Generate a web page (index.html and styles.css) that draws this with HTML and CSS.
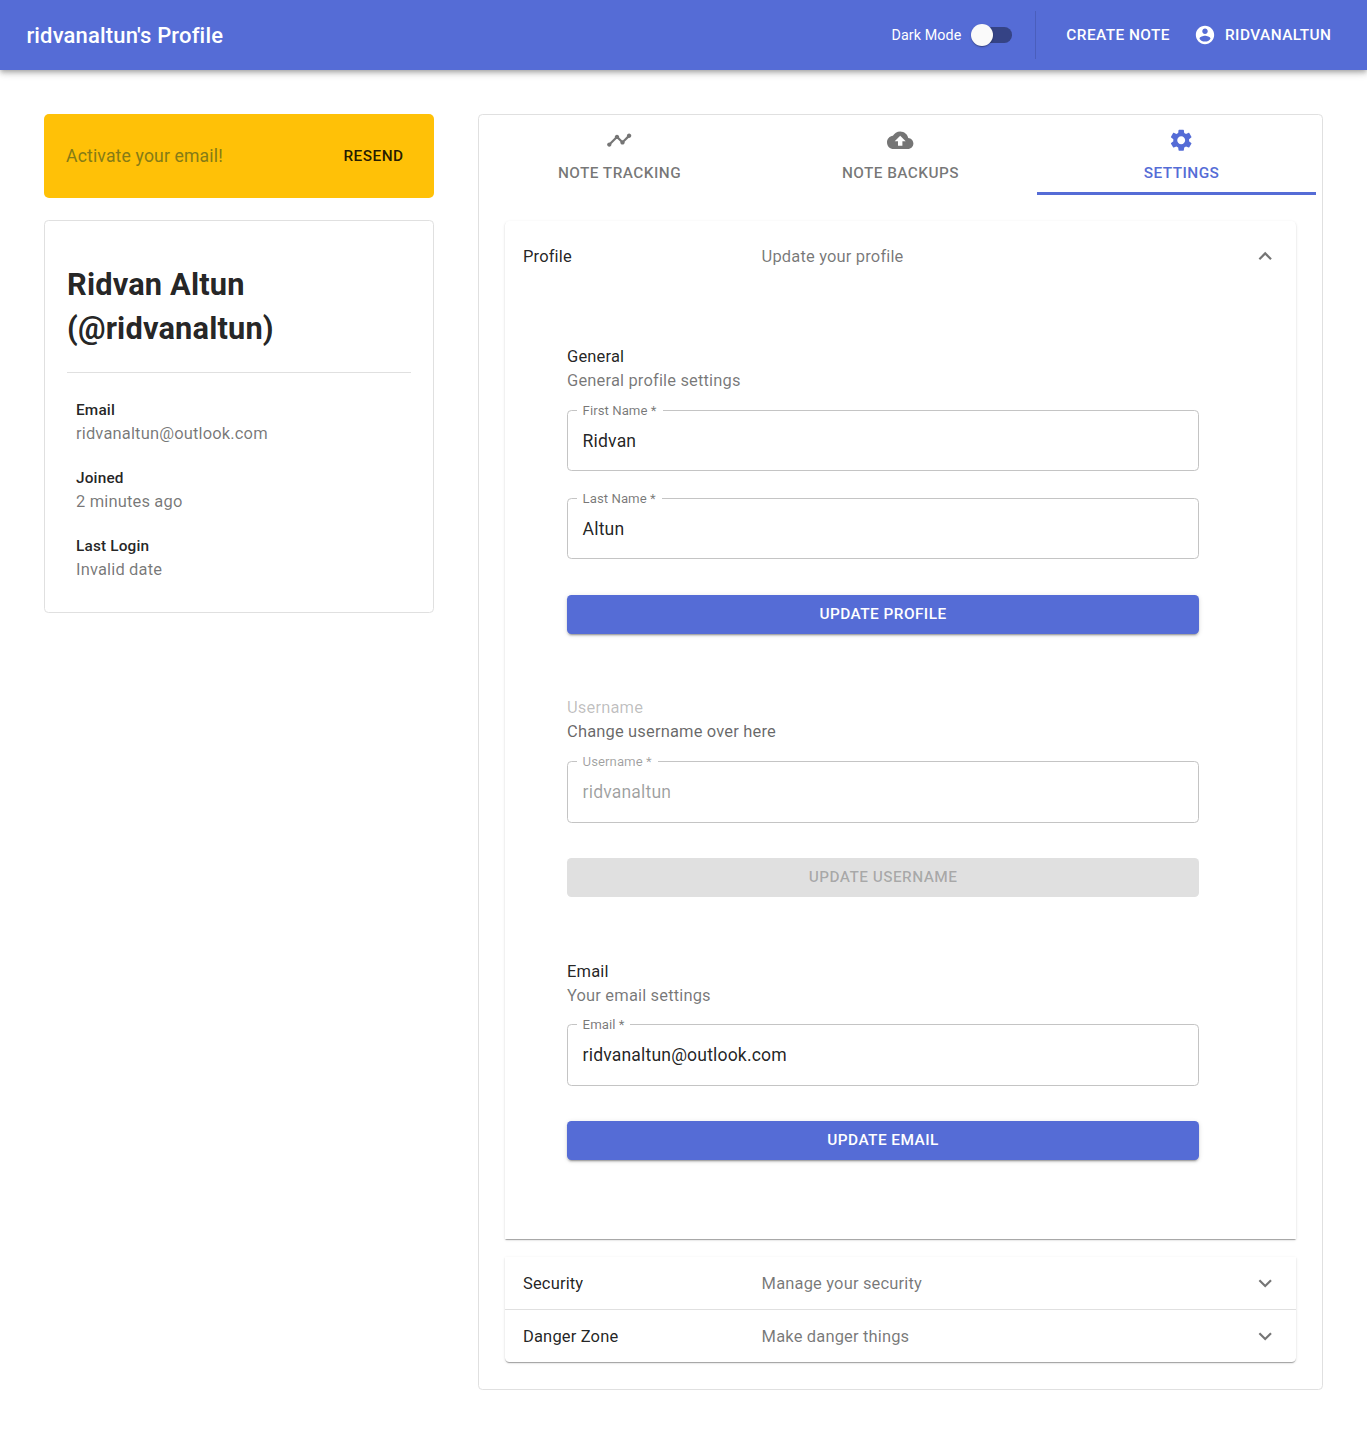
FILE: index.html
```html
<!DOCTYPE html>
<html lang="en">
<head>
<meta charset="utf-8">
<title>ridvanaltun's Profile</title>
<link rel="stylesheet" href="styles.css">
</head>
<body>
<header class="appbar">
  <div class="appbar-title">ridvanaltun's Profile</div>
  <span class="mode-label">Dark Mode</span>
  <span class="switch"><span class="switch-thumb"></span></span>
  <span class="appbar-divider"></span>
  <a class="nav-link nav-create">Create Note</a>
  <a class="nav-link nav-user"><svg class="user-icon" viewBox="0 0 24 24"><path d="M12 2C6.48 2 2 6.48 2 12s4.480 10 10 10 10-4.480 10-10S17.520 2 12 2zm0 3c1.660 0 3 1.340 3 3s-1.340 3-3 3-3-1.340-3-3 1.340-3 3-3zm0 14.200c-2.500 0-4.710-1.280-6-3.220.030-1.990 4-3.080 6-3.080 1.990 0 5.970 1.090 6 3.080-1.290 1.940-3.500 3.220-6 3.220z"/></svg><span>ridvanaltun</span></a>
</header>

<main class="layout">
  <aside class="sidebar">
    <div class="alert">
      <span class="alert-text">Activate your email!</span>
      <span class="alert-action">Resend</span>
    </div>
    <section class="card profile">
      <h1 class="profile-name">Ridvan Altun<br>(@ridvanaltun)</h1>
      <dl class="facts">
        <div class="fact"><dt>Email</dt><dd>ridvanaltun@outlook.com</dd></div>
        <div class="fact"><dt>Joined</dt><dd>2 minutes ago</dd></div>
        <div class="fact"><dt>Last Login</dt><dd>Invalid date</dd></div>
      </dl>
    </section>
  </aside>

  <section class="card content">
    <nav class="tabs">
      <div class="tab"><svg class="icon" viewBox="0 0 24 24"><path d="M23 8c0 1.100-.9 2-2 2-.18 0-.35-.02-.51-.07l-3.560 3.550c.05.16.07.34.07.52 0 1.100-.9 2-2 2s-2-.9-2-2c0-.18.02-.36.07-.52l-2.550-2.550c-.16.05-.34.07-.52.07s-.36-.02-.52-.07l-4.550 4.560c.05.16.07.33.07.51 0 1.100-.9 2-2 2s-2-.9-2-2 .9-2 2-2c.18 0 .35.02.51.07l4.560-4.550C8.020 9.360 8 9.180 8 9c0-1.100.9-2 2-2s2 .9 2 2c0 .18-.02.36-.07.52l2.550 2.550c.16-.05.34-.07.52-.07s.36.02.52.07l3.550-3.560C19.020 8.350 19 8.180 19 8c0-1.100.9-2 2-2s2 .9 2 2z"/></svg><span>Note Tracking</span></div>
      <div class="tab"><svg class="icon" viewBox="0 0 24 24"><path d="M19.350 10.040C18.670 6.590 15.640 4 12 4 9.110 4 6.600 5.640 5.350 8.040 2.340 8.360 0 10.910 0 14c0 3.310 2.690 6 6 6h13c2.760 0 5-2.240 5-5 0-2.640-2.050-4.780-4.650-4.960zM14 13v4h-4v-4H7l5-5 5 5h-3z"/></svg><span>Note Backups</span></div>
      <div class="tab tab-active"><svg class="icon" viewBox="0 0 24 24"><path d="M19.140 12.940c.04-.3.06-.61.06-.94 0-.32-.02-.64-.07-.94l2.030-1.580c.18-.14.23-.41.12-.61l-1.920-3.320c-.12-.22-.37-.29-.59-.22l-2.390.96c-.5-.38-1.030-.7-1.620-.94l-.36-2.540c-.04-.24-.24-.41-.48-.41h-3.840c-.24 0-.43.17-.47.41l-.36 2.540c-.59.24-1.130.57-1.620.94l-2.390-.96c-.22-.08-.47 0-.59.22L2.740 8.870c-.12.21-.08.47.12.61l2.030 1.580c-.05.3-.09.63-.09.94s.02.64.07.94l-2.030 1.580c-.18.14-.23.41-.12.61l1.920 3.320c.12.22.37.29.59.22l2.390-.96c.5.38 1.030.7 1.620.94l.36 2.540c.05.24.24.41.48.41h3.840c.24 0 .44-.17.47-.41l.36-2.540c.59-.24 1.130-.56 1.620-.94l2.390.96c.22.08.47 0 .59-.22l1.920-3.320c.12-.22.07-.47-.12-.61l-2.010-1.580zM12 15.600c-1.980 0-3.600-1.620-3.600-3.600s1.620-3.600 3.600-3.600 3.600 1.620 3.600 3.600-1.620 3.600-3.600 3.600z"/></svg><span>Settings</span></div>
    </nav>

    <div class="panel panel-open">
      <div class="panel-head">
        <span class="panel-name">Profile</span><span class="panel-desc">Update your profile</span>
        <svg class="icon chevron chevron-up" viewBox="0 0 24 24"><path d="M16.590 8.590L12 13.170 7.410 8.590 6 10l6 6 6-6z"/></svg>
      </div>
      <div class="panel-body">
        <form class="form form-general">
          <div class="form-title">General</div>
          <div class="form-sub">General profile settings</div>
          <div class="field"><span class="field-label">First Name *</span><span>Ridvan</span></div>
          <div class="field"><span class="field-label">Last Name *</span><span>Altun</span></div>
          <div class="btn">Update Profile</div>
        </form>
        <form class="form form-username">
          <div class="form-title form-title-off">Username</div>
          <div class="form-sub form-sub-strong">Change username over here</div>
          <div class="field field-off"><span class="field-label">Username *</span><span>ridvanaltun</span></div>
          <div class="btn btn-off">Update Username</div>
        </form>
        <form class="form form-email">
          <div class="form-title">Email</div>
          <div class="form-sub">Your email settings</div>
          <div class="field"><span class="field-label">Email *</span><span>ridvanaltun@outlook.com</span></div>
          <div class="btn">Update Email</div>
        </form>
      </div>
    </div>

    <div class="panel panel-group">
      <div class="panel-head">
        <span class="panel-name">Security</span><span class="panel-desc">Manage your security</span>
        <svg class="icon chevron" viewBox="0 0 24 24"><path d="M16.590 8.590L12 13.170 7.410 8.590 6 10l6 6 6-6z"/></svg>
      </div>
      <div class="panel-head">
        <span class="panel-name">Danger Zone</span><span class="panel-desc">Make danger things</span>
        <svg class="icon chevron" viewBox="0 0 24 24"><path d="M16.590 8.590L12 13.170 7.410 8.590 6 10l6 6 6-6z"/></svg>
      </div>
    </div>
  </section>
</main>
</body>
</html>
```

FILE: styles.css
```css
* { box-sizing: border-box; }

body {
  margin: 0;
  background: #fff;
  color: rgba(0, 0, 0, 0.87);
  font-family: Roboto, "Liberation Sans", sans-serif;
  font-size: 16.5px;
  letter-spacing: 0.00938em;
}

.appbar {
  display: flex;
  align-items: center;
  height: 70px;
  padding: 0 35.6px 0 26.4px;
  background: #556cd6;
  color: #fff;
  box-shadow: 0 2px 4px -1px rgba(0, 0, 0, 0.2), 0 4px 5px rgba(0, 0, 0, 0.14), 0 1px 11px rgba(0, 0, 0, 0.12);
}
.appbar-title { flex: 1; font-size: 22px; font-weight: 500; letter-spacing: 0.0075em; }
.mode-label { font-size: 14.3px; letter-spacing: 0.006em; }
.switch {
  width: 37.4px;
  height: 15.4px;
  margin-left: 13.2px;
  border-radius: 7.7px;
  background: #354385;
  display: flex;
  align-items: center;
}
.switch-thumb {
  flex: none;
  width: 22px;
  height: 22px;
  margin-left: -3.3px;
  border-radius: 50%;
  background: #fafafa;
  box-shadow: 0 2px 1px -1px rgba(0, 0, 0, 0.2), 0 1px 1px rgba(0, 0, 0, 0.14), 0 1px 3px rgba(0, 0, 0, 0.12);
}
.appbar-divider { width: 1px; height: 48px; margin-left: 23.4px; background: rgba(0, 0, 0, 0.12); }
.nav-link {
  display: flex;
  align-items: center;
  font-size: 15.4px;
  font-weight: 500;
  letter-spacing: 0.02857em;
  text-transform: uppercase;
}
.nav-create { margin-left: 30px; }
.nav-user { margin-left: 24px; gap: 9px; }
.user-icon { width: 22px; height: 22px; fill: currentColor; }

.layout { display: grid; grid-template-columns: 390px 845px; gap: 44px; align-items: start; padding: 44px; }
.sidebar { display: flex; flex-direction: column; gap: 22px; }
.alert {
  display: flex;
  align-items: center;
  justify-content: space-between;
  height: 84px;
  padding: 0 30.5px 0 22px;
  border-radius: 5px;
  background: #ffc107;
}
.alert-text { font-size: 17.6px; color: #857b16; }
.alert-action { font-size: 15.4px; font-weight: 500; letter-spacing: 0.02857em; text-transform: uppercase; }

.card { border: 1px solid #e0e0e0; border-radius: 4.4px; background: #fff; }
.profile { height: 393px; padding: 42px 22px 0; }
.profile-name {
  margin: 0;
  padding-bottom: 21px;
  border-bottom: 1px solid #e0e0e0;
  font-size: 30.8px;
  font-weight: 700;
  line-height: 44px;
}
.facts { display: grid; gap: 20px; margin: 25px 0 0; padding-left: 9px; }
.fact dt { font-size: 15.4px; font-weight: 500; line-height: 24px; }
.fact dd { margin: 0; line-height: 24px; color: rgba(0, 0, 0, 0.54); }

.content { height: 1276px; }
.icon { width: 26.4px; height: 26.4px; fill: currentColor; }
.tabs { display: grid; grid-template-columns: repeat(3, 281px); height: 80px; }
.tab {
  position: relative;
  display: flex;
  flex-direction: column;
  align-items: center;
  padding-top: 12px;
  gap: 6.5px;
  font-size: 15.4px;
  font-weight: 500;
  line-height: 27px;
  letter-spacing: 0.02857em;
  text-transform: uppercase;
  color: rgba(0, 0, 0, 0.54);
}
.tab-active { color: #556cd6; }
.tab-active::after {
  content: "";
  position: absolute;
  left: -4px;
  bottom: 0;
  width: 279px;
  height: 3px;
  background: #556cd6;
}

.panel {
  width: 791px;
  margin-left: 26px;
  background: #fff;
  box-shadow: 0 2px 1px -1px rgba(0, 0, 0, 0.2), 0 1px 1px rgba(0, 0, 0, 0.14), 0 1px 3px rgba(0, 0, 0, 0.12);
}
.panel-open { height: 1018px; margin-top: 26px; border-radius: 4.4px 4.4px 0 0; }
.panel-group { margin-top: 18px; border-radius: 0 0 4.4px 4.4px; }
.panel-head { display: flex; align-items: center; height: 52px; padding: 0 18px; }
.panel-open .panel-head { height: 70px; }
.panel-group .panel-head + .panel-head { height: 53px; border-top: 1px solid #e0e0e0; }
.panel-name { width: 238.6px; }
.panel-desc { flex: 1; color: rgba(0, 0, 0, 0.54); }
.chevron { color: rgba(0, 0, 0, 0.54); }
.chevron-up { transform: rotate(180deg); }

.panel-body { display: flex; flex-direction: column; padding: 54px 97px 0 62px; }
.form { display: flex; flex-direction: column; }
.form-title, .form-sub { line-height: 24px; }
.form-title-off { color: rgba(0, 0, 0, 0.26); }
.form-sub { color: rgba(0, 0, 0, 0.54); }
.form-sub-strong { color: rgba(0, 0, 0, 0.6); }
.field {
  position: relative;
  height: 62px;
  margin-top: 17px;
  padding-left: 14.6px;
  border: 1px solid #c4c4c4;
  border-radius: 4.4px;
  font-size: 17.6px;
  line-height: 60px;
}
.form-general .field { height: 61px; }
.form-general .field + .field { margin-top: 27px; }
.field-off { color: rgba(0, 0, 0, 0.38); }
.field-label {
  position: absolute;
  left: 9px;
  top: -8px;
  padding: 0 6px 0 5.6px;
  background: #fff;
  font-size: 13.2px;
  line-height: 16px;
  letter-spacing: 0.003em;
  color: rgba(0, 0, 0, 0.54);
}
.field-off .field-label { color: rgba(0, 0, 0, 0.38); }
.btn {
  height: 39px;
  margin-top: 35px;
  border-radius: 4.4px;
  background: #556cd6;
  color: #fff;
  font-size: 15.4px;
  font-weight: 500;
  line-height: 38px;
  letter-spacing: 0.02857em;
  text-align: center;
  text-transform: uppercase;
  box-shadow: 0 3px 1px -2px rgba(0, 0, 0, 0.2), 0 2px 2px rgba(0, 0, 0, 0.14), 0 1px 5px rgba(0, 0, 0, 0.12);
}
.form-general .btn { margin-top: 36px; }
.btn-off { background: #e0e0e0; color: rgba(0, 0, 0, 0.26); box-shadow: none; }
.form-username { margin-top: 62px; }
.form-email { margin-top: 63px; }
.form-email .field { margin-top: 16px; }
```
